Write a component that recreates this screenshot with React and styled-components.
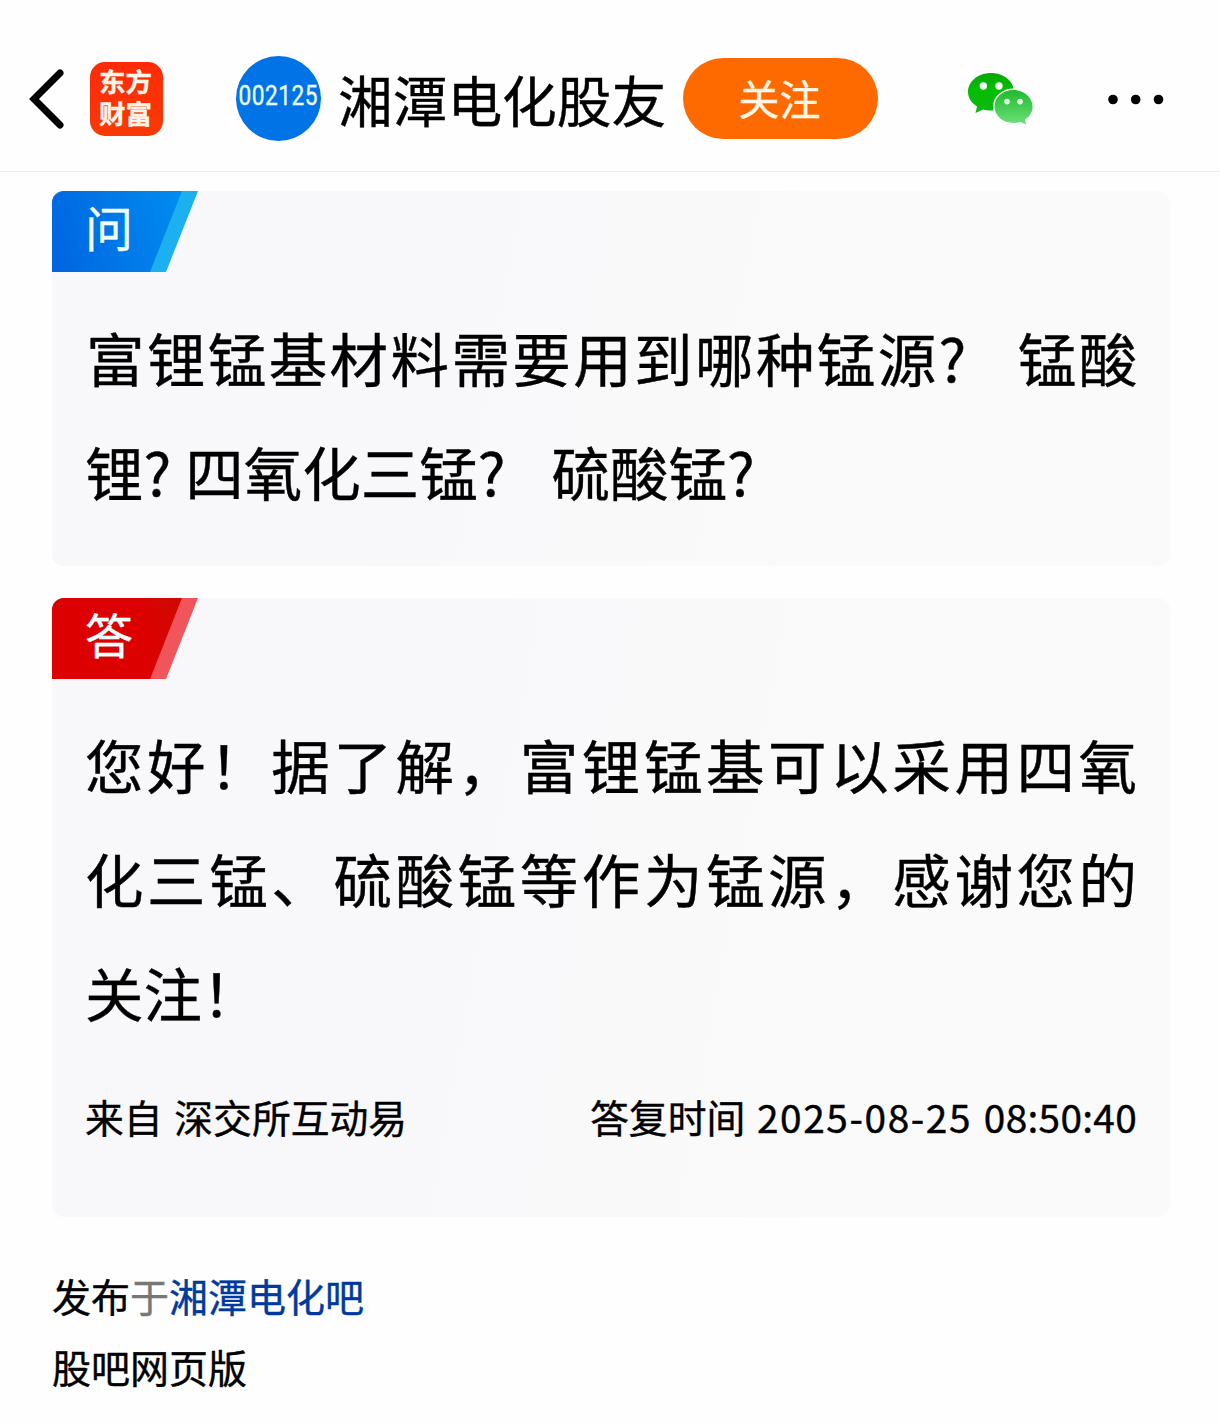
import React from "react"
import styled, { createGlobalStyle } from "styled-components"

const GlobalStyle = createGlobalStyle`
    * {
        box-sizing: border-box;
    }
    body {
        margin: 0;
        background: #fefefe;
        color: #000;
        font-family: "Noto Sans CJK SC", sans-serif;
        -webkit-text-stroke-width: 0.4px;
    }
`;

const Page = styled.div`
    width: 1220px;
    height: 1426px;
    overflow: hidden;
`;

const Header = styled.header`
    display: flex;
    align-items: center;
    height: 172px;
    padding: 26px 55px 0 28px;
    border-bottom: 1px solid #f0f0f0;
`;

const Logo = styled.div`
    display: flex;
    flex-direction: column;
    align-items: center;
    justify-content: center;
    width: 73px;
    height: 74px;
    margin-left: 24px;
    padding: 1px 2px 0 0;
    border-radius: 15px;
    background: linear-gradient(#ff2a08, #f83a04);
    color: #fff4e8;
    font-family: "Liberation Sans", "Noto Sans CJK SC", sans-serif;
    font-size: 26.5px;
    font-weight: 700;
    line-height: 32px;
`;

const Avatar = styled.div`
    display: flex;
    align-items: center;
    justify-content: center;
    width: 85px;
    height: 85px;
    margin-left: 73px;
    padding-bottom: 6px;
    border-radius: 50%;
    background: #0073e6;
`;

const Code = styled.span`
    color: #e8fbff;
    font-family: Roboto, sans-serif;
    font-size: 27px;
    font-weight: 400;
    letter-spacing: 0.6px;
    margin-right: -0.6px;
    transform: scaleX(0.84);
`;

const Title = styled.h1`
    margin: 0 0 0 17px;
    width: 345px;
    font-size: 54.7px;
    font-weight: 400;
    line-height: 80px;
    white-space: nowrap;
`;

const FollowButton = styled.button`
    width: 195px;
    height: 81px;
    padding: 0 2px 3px 0;
    border: 0;
    border-radius: 41px;
    background: #ff6a00;
    color: #fff6e6;
    font-family: inherit;
    font-size: 41px;
    line-height: 60px;
`;

const WechatIcon = styled.svg`
    margin-left: 88px;
`;

const MoreIcon = styled.svg`
    margin-left: auto;
`;

const Main = styled.main`
    padding: 19px 50px 0 52px;
`;

const Card = styled.section`
    height: ${(props) => props.$height}px;
    margin-bottom: 32px;
    border-radius: 12px;
    background: linear-gradient(100deg, #f8f8fb 30%, #fafafa 70%);
    overflow: hidden;
`;

const Tag = styled.div`
    width: 146px;
    height: 81px;
    padding-left: 33px;
    background: ${(props) => props.$edge};
    clip-path: polygon(0 0, 100% 0, 114px 100%, 0 100%);
    position: relative;
    color: #f2ffff;
    font-size: 48px;
    line-height: 71px;

    &::before {
        content: "";
        position: absolute;
        inset: 0;
        background: ${(props) => props.$fill};
        clip-path: polygon(0 0, 130px 0, 98px 100%, 0 100%);
    }

    span {
        position: relative;
    }
`;

const Body = styled.div`
    padding: 28px 33px 0;
`;

const Line = styled.div`
    display: flex;
    height: 114px;
    font-size: 58.5px;
    line-height: 114px;
    letter-spacing: ${(props) => props.$spacing || 0}px;
    white-space: nowrap;
`;

const Part = styled.span`
    margin-left: ${(props) => props.$gap || 0}px;
`;

const Meta = styled.div`
    display: flex;
    justify-content: space-between;
    margin-top: 37px;
    font-size: 38.8px;
    line-height: 60px;
    word-spacing: 3px;
    white-space: nowrap;
`;

const Time = styled.span`
    letter-spacing: ${(props) => props.$spacing || 0}px;
`;

const Footer = styled.footer`
    margin-top: 43px;
    font-size: 39px;
    line-height: 71px;
`;

const Faded = styled.span`
    color: #777;
`;

const BarLink = styled.a`
    color: #003a9e;
`;

const App = () => {
    return (
        <Page>
            <GlobalStyle />
            <Header>
                <svg width="38" height="62" viewBox="0 0 38 62" fill="none">
                    <path d="M32 5L6 31L32 57" stroke="#000" strokeWidth="7" strokeLinecap="round" />
                </svg>
                <Logo>
                    <span>东方</span>
                    <span>财富</span>
                </Logo>
                <Avatar><Code>002125</Code></Avatar>
                <Title>湘潭电化股友</Title>
                <FollowButton>关注</FollowButton>
                <WechatIcon width="68" height="54" viewBox="0 0 68 54">
                    <defs>
                        <linearGradient id="back" x1="0" y1="0" x2="0" y2="1">
                            <stop offset="0" stopColor="#08a808" />
                            <stop offset="0.4" stopColor="#04bd04" />
                            <stop offset="1" stopColor="#10b810" />
                        </linearGradient>
                        <linearGradient id="front" x1="0" y1="0" x2="0" y2="1">
                            <stop offset="0" stopColor="#1fba2d" />
                            <stop offset="1" stopColor="#6ee07b" />
                        </linearGradient>
                    </defs>
                    <path d="M25 1C12 1 2 9.500 2 20C2 26 5.500 31 11 34.500L9.500 41L17 37.500C19.500 38.300 22 38.600 25 38.600C38 38.600 48 30 48 20C48 9.500 38 1 25 1Z" fill="url(#back)" />
                    <path d="M47.500 18C37 18 28.500 25.400 28.500 34.600C28.500 43.800 37 51 47.500 51C50 51 52.500 50.600 54.500 49.900L60 52.600L59 47.500C64 44.500 66.600 40 66.600 34.600C66.600 25.400 58 18 47.500 18Z" fill="url(#front)" stroke="#fff" strokeWidth="3" paintOrder="stroke" />
                    <circle cx="17.300" cy="14" r="3.700" fill="#f0fff0" />
                    <circle cx="33" cy="14" r="3.700" fill="#f0fff0" />
                    <circle cx="41" cy="29.600" r="2.800" fill="#e4ffe6" />
                    <circle cx="54" cy="29.600" r="2.800" fill="#e4ffe6" />
                </WechatIcon>
                <MoreIcon width="60" height="12" viewBox="0 0 60 12">
                    <circle cx="8" cy="6.500" r="4.800" />
                    <circle cx="30.700" cy="6.500" r="4.800" />
                    <circle cx="53.500" cy="6.500" r="4.800" />
                </MoreIcon>
            </Header>
            <Main>
                <Card $height={375}>
                    <Tag $fill="linear-gradient(75deg, #0064e0, #0090f2)" $edge="#1cb0f0"><span>问</span></Tag>
                    <Body>
                        <Line $spacing={2.4}>
                            <Part $gap={1}>富锂锰基材料需要用到哪种锰源?</Part>
                            <Part $gap={49}>锰酸</Part>
                        </Line>
                        <Line>
                            <Part>锂?</Part>
                            <Part $gap={14}>四氧化三锰?</Part>
                            <Part $gap={46}>硫酸锰?</Part>
                        </Line>
                    </Body>
                </Card>
                <Card $height={619}>
                    <Tag $fill="linear-gradient(75deg, #dc0000 60%, #cc0c00)" $edge="#f0555c"><span>答</span></Tag>
                    <Body>
                        <Line $spacing={3.6}>您好！据了解，富锂锰基可以采用四氧</Line>
                        <Line $spacing={3.6}>化三锰、硫酸锰等作为锰源，感谢您的</Line>
                        <Line>关注！</Line>
                        <Meta>
                            <span>来自 深交所互动易</span>
                            <span>答复时间 <Time $spacing={1.6}>2025-08-25</Time> <Time $spacing={0.3}>08:50:40</Time></span>
                        </Meta>
                    </Body>
                </Card>
                <Footer>
                    <div>发布<Faded>于</Faded><BarLink>湘潭电化吧</BarLink></div>
                    <div>股吧网页版</div>
                </Footer>
            </Main>
        </Page>
    )
}

export default App
